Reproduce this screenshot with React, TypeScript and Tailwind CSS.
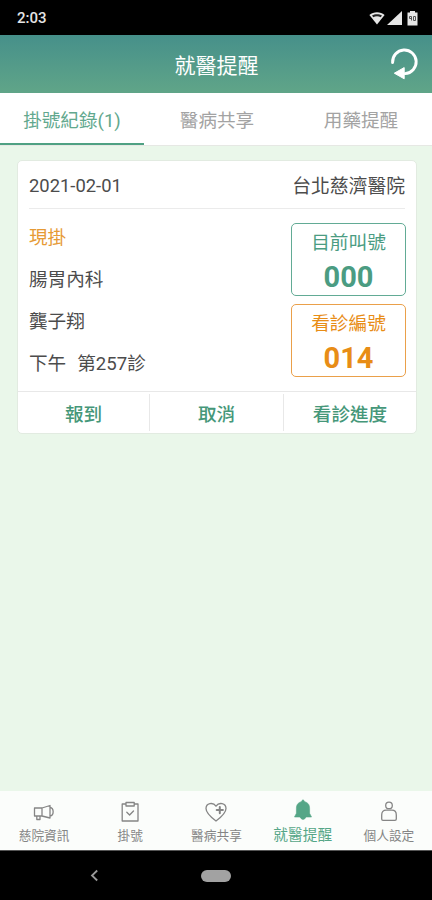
import type { ReactNode } from "react";

const TABS = ["掛號紀錄(1)", "醫病共享", "用藥提醒"];

function StatusBar() {
  return (
    <div className="flex h-[35px] shrink-0 items-center justify-between bg-black pl-[17px] pr-[14px] pt-px">
      <span className="text-[15px] font-medium leading-none text-[#e4e4e4]">2:03</span>
      <div className="flex items-center gap-[2px] text-[#e6e6e6]">
        <svg width="16" height="14" viewBox="0 0 16 14">
          <path d="M.4 4C4.6.3 11.4.3 15.6 4L8 13.4Z" fill="currentColor" />
          <path d="M3 4.6C5.8 2.7 10.2 2.7 13 4.6L11.7 6.2C9.6 4.8 6.4 4.8 4.3 6.2Z" fill="#222" />
        </svg>
        <svg width="15" height="14" viewBox="0 0 15 14">
          <path d="M15 0V14H0Z" fill="currentColor" />
        </svg>
        <svg width="11" height="15" viewBox="0 0 11 15" className="ml-[3px]">
          <path d="M3 0H8V1.5H10.5V14.5H.5V1.5H3Z" fill="currentColor" />
          <path d="M2.5 5.5H4.5V9.5M2.5 5.5V7.5H4.5M6.5 5.5H8.5V9.5H6.5Z" fill="none" stroke="#555" />
        </svg>
      </div>
    </div>
  );
}

function Header() {
  return (
    <header className="grid h-[58px] shrink-0 grid-cols-[1fr_auto_1fr] items-center bg-gradient-to-b from-[#46908a] to-[#60a588]">
      <span />
      <h1 className="pl-px pt-[4px] text-[21px] leading-none text-white">就醫提醒</h1>
      <svg width="28" height="32" viewBox="0 0 28 32" className="mr-[14px] justify-self-end">
        <path d="M2.6 14.6A11.8 11.8 0 1 1 15 25.6" fill="none" stroke="#fff" strokeWidth="2.9" strokeLinecap="round" />
        <path d="M4.3 25.2L14.2 19.6V30.8Z" fill="#fff" stroke="#fff" strokeLinejoin="round" />
      </svg>
    </header>
  );
}

function Tabs() {
  return (
    <nav className="grid h-[53px] shrink-0 grid-cols-3 border-b border-[#e6e8e4] bg-white">
      {TABS.map((tab, i) => (
        <div
          key={tab}
          className={
            i === 0
              ? "flex items-center justify-center border-b-2 border-[#4fa183] pt-[7px] text-[18.6px] leading-none text-[#62a88e]"
              : "flex items-center justify-center border-b-2 border-transparent pl-[2px] pt-[7px] text-[18.6px] leading-none text-[#a3a3a3]"
          }
        >
          {tab}
        </div>
      ))}
    </nav>
  );
}

function NumberBox({ label, value, tone }: { label: string; value: string; tone: string }) {
  return (
    <div className={`flex h-[73px] w-[115px] flex-col items-center rounded-[5px] border-[1.5px] pt-[9px] ${tone}`}>
      <span className="text-[18.7px] leading-[20px]">{label}</span>
      <span className="mt-[9px] text-[29px] font-bold leading-[30px]">{value}</span>
    </div>
  );
}

function Card() {
  return (
    <section className="ml-[17px] mr-[15px] mt-[14px] flex h-[274px] flex-col rounded-[5px] border border-[#e2ebe1] bg-white text-[18.6px] text-[#4c4c4c]">
      <div className="mx-[11px] flex h-[48px] items-center justify-between border-b border-[#ebebeb] pt-[2px]">
        <span className="text-[18.4px]">2021-02-01</span>
        <span className="pt-[3px] text-[18.8px]">台北慈濟醫院</span>
      </div>
      <div className="flex flex-1 justify-between pl-[11px] pr-[10px]">
        <div className="flex flex-col pt-[8px] leading-[42px]">
          <span className="text-[#e69a35]">現掛</span>
          <span>腸胃內科</span>
          <span>龔子翔</span>
          <span className="flex gap-[11px]">
            <span>下午</span>
            <span>第257診</span>
          </span>
        </div>
        <div className="flex flex-col gap-[8px] pt-[14px]">
          <NumberBox label="目前叫號" value="000" tone="border-[#62ab95] text-[#4b9c82]" />
          <NumberBox label="看診編號" value="014" tone="border-[#eaa04a] text-[#e88d16]" />
        </div>
      </div>
      <div className="grid h-[42px] grid-cols-[132px_134px_1fr] border-t border-[#e8e8e8] py-[2px] font-medium leading-none text-[#459779]">
        <span className="flex items-center justify-center border-r border-[#e8e8e8] pt-[5px]">報到</span>
        <span className="flex items-center justify-center border-r border-[#e8e8e8] pt-[5px]">取消</span>
        <span className="flex items-center justify-center pt-[5px]">看診進度</span>
      </div>
    </section>
  );
}

function NavItem({ label, active, children }: { label: string; active?: boolean; children: ReactNode }) {
  return (
    <div className={active ? "flex flex-col items-center text-[#55a687]" : "flex flex-col items-center text-[#858585]"}>
      <svg
        width="24"
        height="24"
        viewBox="0 0 24 24"
        fill="none"
        stroke="currentColor"
        strokeWidth="1.3"
        strokeLinejoin="round"
        strokeLinecap="round"
        className="mt-[8px]"
      >
        {children}
      </svg>
      <span className={active ? "mt-[4px] text-[14.7px] leading-[16px]" : "mt-[6px] text-[12.7px] leading-[14px]"}>
        {label}
      </span>
    </div>
  );
}

function BottomNav() {
  return (
    <nav className="grid h-[59px] shrink-0 grid-cols-5 bg-[#fbfdfb] pl-px">
      <NavItem label="慈院資訊">
        <path d="M2.5 9H10V17H2.5ZM4.8 17V20.5H8V17M10 9L18 6.5V19L10 17M18 8.5C22.2 9 22.2 16.5 18 17" />
      </NavItem>
      <NavItem label="掛號">
        <path d="M8 5H4.2V22H20V5H16.2M8 3.5H16.2V7H8ZM8.8 13.3L11.6 16L15.5 12" />
      </NavItem>
      <NavItem label="醫病共享">
        <path d="M12 22C6 17.5 2 14 2 9.5C2 4 9 2.8 12 7.2C15 2.8 22 4 22 9.5C22 14 18 17.5 12 22Z" />
        <path d="M15.8 8V14.2M12.7 11.1H18.9" strokeWidth="2" />
      </NavItem>
      <NavItem label="就醫提醒" active>
        <path
          d="M12 1.2C12.9 1.2 13.6 1.8 13.6 2.7C17.3 3.6 18.6 6.2 18.6 9.5V14.3L20.5 18H3.5L5.4 14.3V9.5C5.4 6.2 6.7 3.6 10.4 2.7C10.4 1.8 11.1 1.2 12 1.2ZM9.3 18H14.7C14.4 21.2 9.6 21.2 9.3 18Z"
          fill="currentColor"
          strokeWidth=".6"
        />
      </NavItem>
      <NavItem label="個人設定">
        <circle cx="12" cy="6.4" r="3.3" />
        <path d="M9.2 11.2H14.8C17.8 11.2 19.3 13 19.3 16V20C19.3 20.8 18.9 21.3 18 21.3H6C5.1 21.3 4.7 20.8 4.7 20V16C4.7 13 6.2 11.2 9.2 11.2Z" />
      </NavItem>
    </nav>
  );
}

function SystemNav() {
  return (
    <div className="grid h-[50px] shrink-0 grid-cols-[1fr_30px_1fr] items-center border-t border-[#555] bg-black">
      <svg width="9" height="13" viewBox="0 0 9 13" className="ml-[90px]">
        <path d="M7.2 1.5L2 6.5L7.2 11.5" fill="none" stroke="#999" strokeWidth="1.8" />
      </svg>
      <div className="h-[12px] rounded-full bg-[#a2a2a2]" />
      <span />
    </div>
  );
}

export default function App() {
  return (
    <div className="flex h-[900px] w-[432px] flex-col overflow-hidden bg-[#eaf7ea] font-[Roboto,'Noto_Sans_CJK_TC',sans-serif]">
      <StatusBar />
      <Header />
      <Tabs />
      <main className="flex-1">
        <Card />
      </main>
      <BottomNav />
      <SystemNav />
    </div>
  );
}
